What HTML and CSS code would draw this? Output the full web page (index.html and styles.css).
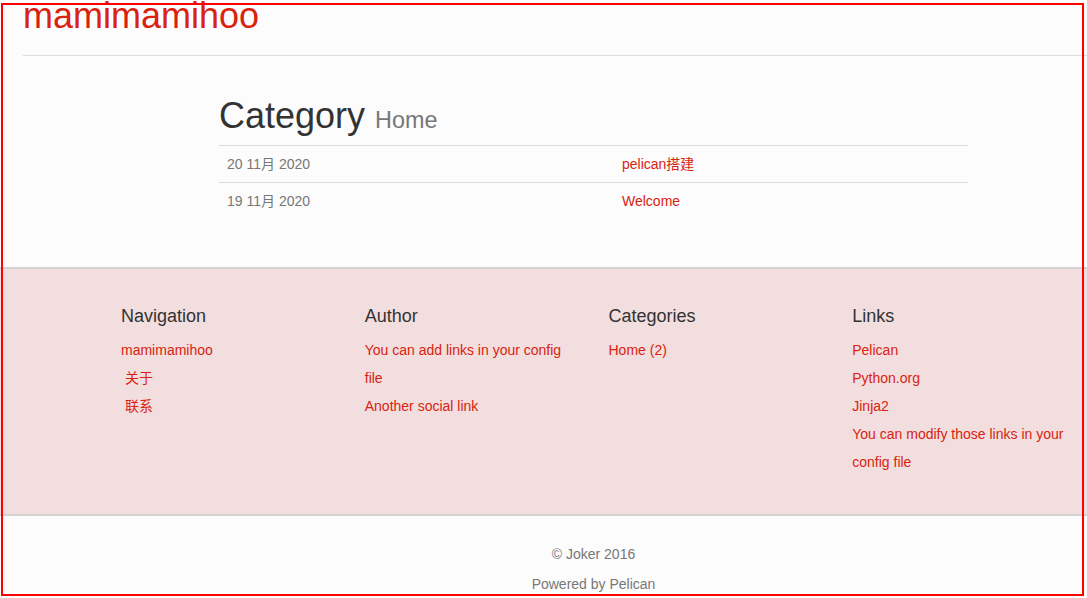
FILE: index.html
```html
<!DOCTYPE html>
<html lang="zh-CN">
<head>
<meta charset="utf-8">
<title>mamimamihoo - Category Home</title>
<link rel="stylesheet" href="styles.css">
</head>
<body>
<header class="site-header">
  <h1 class="brand"><a href="#">mamimamihoo</a></h1>
</header>

<main class="container">
  <div class="posts">
    <h1 class="page-title">Category <small>Home</small></h1>
    <div class="post-list">
      <div class="post-row">
        <div class="post-date">20 11月 2020</div>
        <div class="post-link"><a href="#">pelican搭建</a></div>
      </div>
      <div class="post-row">
        <div class="post-date">19 11月 2020</div>
        <div class="post-link"><a href="#">Welcome</a></div>
      </div>
    </div>
  </div>
</main>

<section class="footer-band">
  <div class="container footer-cols">
    <div class="footer-col">
      <h3>Navigation</h3>
      <ul>
        <li><a href="#">mamimamihoo</a></li>
        <li class="sub"><a href="#">关于</a></li>
        <li class="sub"><a href="#">联系</a></li>
      </ul>
    </div>
    <div class="footer-col">
      <h3>Author</h3>
      <ul>
        <li><a href="#">You can add links in your config file</a></li>
        <li><a href="#">Another social link</a></li>
      </ul>
    </div>
    <div class="footer-col">
      <h3>Categories</h3>
      <ul>
        <li><a href="#">Home (2)</a></li>
      </ul>
    </div>
    <div class="footer-col">
      <h3>Links</h3>
      <ul>
        <li><a href="#">Pelican</a></li>
        <li><a href="#">Python.org</a></li>
        <li><a href="#">Jinja2</a></li>
        <li><a href="#">You can modify those links in your config file</a></li>
      </ul>
    </div>
  </div>
</section>

<footer class="container site-footer">
  <p>© Joker 2016</p>
  <p>Powered by <a href="#" class="plain">Pelican</a></p>
</footer>

<div class="frame"></div>
</body>
</html>
```

FILE: styles.css
```css
html, body {
  margin: 0;
  padding: 0;
}
body {
  background: #fcfcfc;
  color: #777777;
  font-family: "Liberation Sans", Arial, "Noto Sans CJK SC", sans-serif;
  font-size: 14px;
  line-height: 20px;
  overflow: hidden;
}
a {
  color: #d9230f;
  text-decoration: none;
}

.site-header {
  margin-left: 23px;
  padding-bottom: 19px;
  border-bottom: 1px solid #dddddd;
}
.brand {
  margin: -4px 0 0;
  font-size: 36px;
  line-height: 40px;
  font-weight: normal;
}

.container {
  width: 975px;
  margin-left: 106px;
  box-sizing: border-box;
}

.posts {
  width: 749px;
  margin: 0 auto;
  padding-top: 40px;
}
.page-title {
  margin: 0 0 9px;
  font-size: 36px;
  line-height: 40px;
  height: 40px;
  font-weight: normal;
  color: #333333;
}
.page-title small {
  font-size: 65%;
  line-height: 1;
  color: #777777;
}
.post-row {
  display: grid;
  grid-template-columns: 395px 1fr;
  border-top: 1px solid #dddddd;
}
.post-date, .post-link {
  padding: 8px;
  height: 20px;
}

.footer-band {
  margin-top: 48px;
  background: #f2dede;
  border-top: 2px solid #d3d3d3;
  border-bottom: 2px solid #d3d3d3;
  padding: 37px 0 38px;
}
.footer-cols {
  display: grid;
  grid-template-columns: repeat(4, 1fr);
}
.footer-col {
  padding: 0 15px;
}
.footer-col h3 {
  margin: 0 0 10px;
  font-size: 18px;
  line-height: 20px;
  font-weight: normal;
  color: #333333;
}
.footer-col ul {
  list-style: none;
  margin: 0;
  padding: 0;
}
.footer-col li {
  line-height: 28px;
}
.footer-col li.sub {
  padding-left: 4px;
}

.site-footer {
  padding-top: 28px;
  text-align: center;
}
.site-footer p {
  margin: 0 0 10px;
}
.site-footer a.plain {
  color: #777777;
}

.frame {
  position: fixed;
  left: 1px;
  top: 3px;
  width: 1079px;
  height: 589px;
  border: 2px solid #ff0000;
  pointer-events: none;
}
```
